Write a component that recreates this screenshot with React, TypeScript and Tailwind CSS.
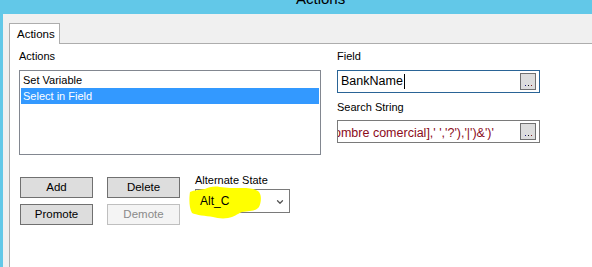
import { ChevronDown } from "lucide-react";

const font = { fontFamily: '"Liberation Sans", Arial, sans-serif' };

function Button({ label, disabled }: { label: string; disabled?: boolean }) {
  return (
    <div
      className={
        "w-[73px] h-[21px] flex items-center justify-center text-[11.5px] border " +
        (disabled
          ? "border-[#bfbfbf] bg-[#f4f4f4] text-[#8a8a8a]"
          : "border-[#707070] bg-[#dddddd] text-black")
      }
    >
      {label}
    </div>
  );
}

function DotsButton() {
  return (
    <div className="w-[16px] h-[17px] border border-[#707070] bg-[#dddddd] flex items-end justify-center pb-[3px]">
      <div className="flex gap-[2px]">
        <div className="w-px h-px bg-[#1a1a80]" />
        <div className="w-px h-px bg-[#1a1a1a]" />
        <div className="w-px h-px bg-[#801a1a]" />
      </div>
    </div>
  );
}

export default function App() {
  return (
    <div
      className="w-[592px] h-[267px] overflow-hidden bg-[#62c8e8] flex flex-col text-black"
      style={font}
    >
      {/* title bar */}
      <div className="h-[14px] shrink-0 relative overflow-hidden">
        <div className="absolute left-[296px] top-[-10px] text-[15px] leading-[18px] text-black">
          Actions
        </div>
      </div>

      <div className="flex flex-1 min-h-0">
        <div className="w-[3px] shrink-0" />
        <div className="flex-1 bg-[#f0f0f0] pl-[6px] pt-[8px] flex flex-col">
          {/* tab */}
          <div className="flex items-end h-[21px]">
            <div className="w-[51px] h-[21px] border border-b-0 border-[#adadad] bg-white relative z-10 -mb-px pl-[7px] pt-[3px] text-[11.5px] leading-[14px]">
              Actions
            </div>
            <div className="flex-1" />
          </div>

          {/* panel */}
          <div className="flex-1 bg-white border-l border-t border-[#adadad] flex pl-[9px] pt-[4px]">
            <div className="w-[302px] flex flex-col">
              <div className="text-[11px] leading-[16px] h-[16px]">Actions</div>
              <div className="mt-[6px] h-[85px] border border-[#828790] p-px text-[11px]">
                <div className="h-[16px] leading-[16px] pl-[2px]">Set Variable</div>
                <div className="h-[16px] leading-[16px] pl-[2px] bg-[#3399ff] text-white">
                  Select in Field
                </div>
              </div>

              <div className="flex mt-[22px] pl-px">
                <div className="flex flex-col gap-[6px]">
                  <Button label="Add" />
                  <Button label="Promote" />
                </div>
                <div className="flex flex-col gap-[6px] ml-[14px]">
                  <Button label="Delete" />
                  <Button label="Demote" disabled />
                </div>
                <div className="ml-[15px] -mt-[5px] flex flex-col">
                  <div className="text-[11px] leading-[16px]">Alternate State</div>
                  <div className="relative mt-px w-[95px] h-[24px] border border-[#7a7a7a] bg-white flex items-center">
                    <svg
                      className="absolute left-[-8px] top-[-4px]"
                      width="74"
                      height="33"
                      viewBox="0 0 74 33"
                    >
                      <path
                        d="M2 6 C6 4 12 4 17 3 C21 1 26 0 32 1 C38 2 46 2 54 2 C62 2 68 3 71 6 C74 10 73 17 71 21 C68 25 62 25 54 26 C49 28 46 31 40 32 C34 33 29 32 25 31 C18 30 8 29 4 27 C1 22 1 12 2 6 Z"
                        fill="#ffff00"
                      />
                    </svg>
                    <span className="relative z-10 pl-[4px] text-[12px]">Alt_C</span>
                    <ChevronDown
                      className="absolute right-[4px] top-[7px] text-[#555]"
                      size={10}
                      strokeWidth={3}
                    />
                  </div>
                </div>
              </div>
            </div>

            <div className="ml-[16px] w-[203px] flex flex-col">
              <div className="text-[11px] leading-[16px] h-[16px]">Field</div>
              <div className="mt-[6px] h-[23px] border border-[#2a6496] flex items-center pl-[3px] pr-[3px]">
                <span className="text-[12.5px]">BankName</span>
                <div className="w-px h-[15px] bg-black ml-px" />
                <div className="flex-1" />
                <DotsButton />
              </div>
              <div className="mt-[6px] text-[11px] leading-[16px] h-[16px]">Search String</div>
              <div className="mt-[5px] h-[23px] border border-[#7a7a7a] flex items-center pr-[3px]">
                <div className="flex-1 overflow-hidden whitespace-nowrap">
                  <span className="text-[12.5px] text-[#8b0b1a] ml-[-4px] inline-block">
                    ombre comercial],' ','?'),'|')&')'
                  </span>
                </div>
                <DotsButton />
              </div>
            </div>
          </div>
        </div>
      </div>
    </div>
  );
}
